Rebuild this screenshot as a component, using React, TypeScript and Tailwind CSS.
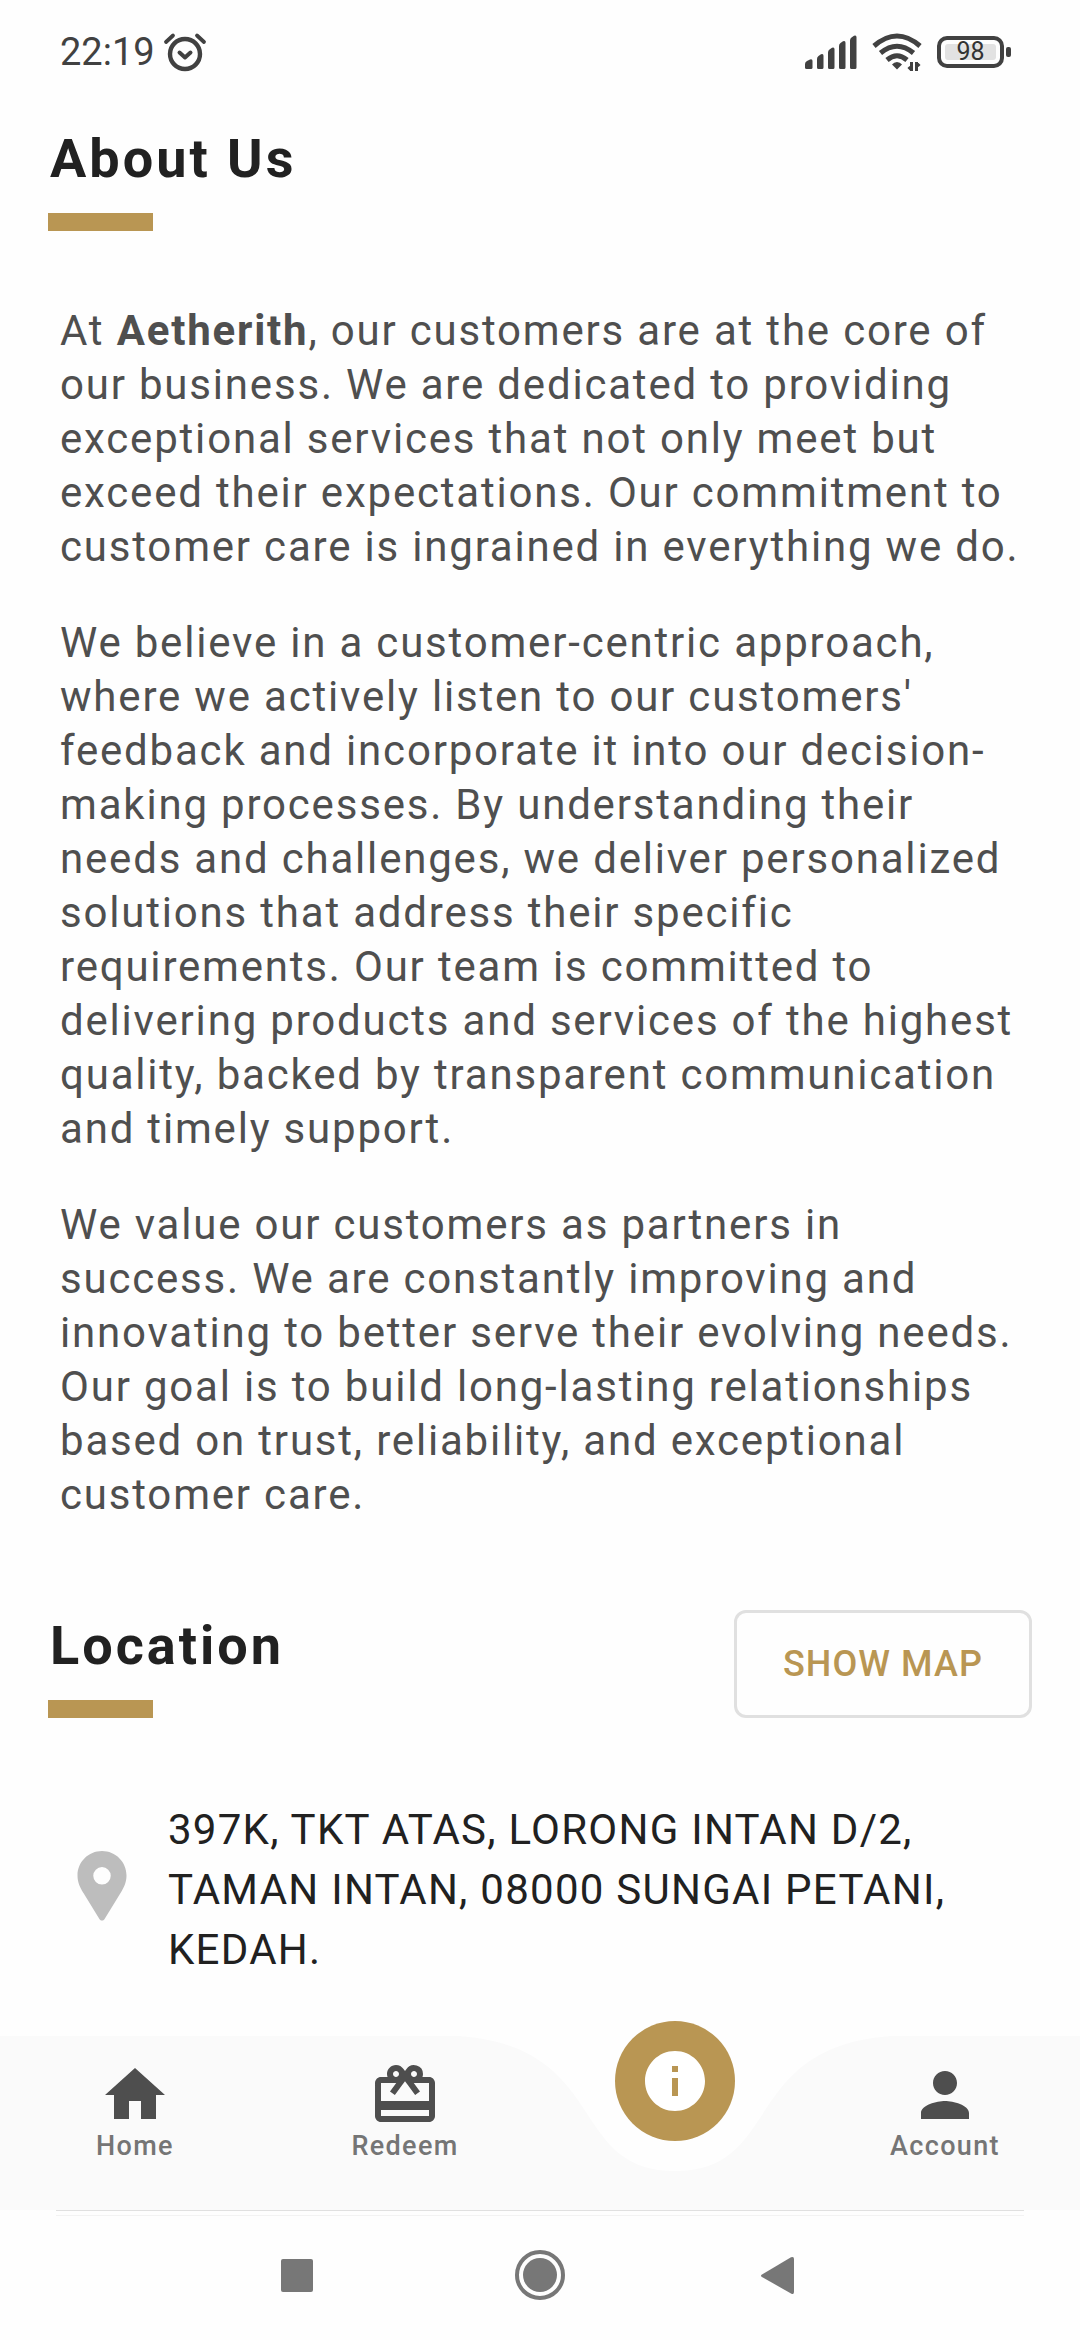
import { ReactNode } from "react";
import { MdHome, MdRedeem, MdInfo, MdPerson } from "react-icons/md";

const GRAY = "#414141";

function AlarmIcon() {
  return (
    <svg width="44" height="40" viewBox="0 0 44 40" fill="none" stroke={GRAY} strokeLinecap="round" aria-label="Alarm set">
      <circle cx="22" cy="22" r="15" strokeWidth="4.4" />
      <path d="M16.5 20.5l5.5 5 5.5-5" strokeWidth="4" strokeLinejoin="round" />
      <path d="M3 10l7-6.5M41 10l-7-6.5" strokeWidth="3.8" />
    </svg>
  );
}

function SignalIcon() {
  return (
    <svg width="52" height="34" viewBox="0 0 52 34" fill={GRAY} aria-label="Signal strength">
      <path d="M0 29q0-2 2-3l3-1.5q2.500-.8 2.500 1.500v6.500q0 1.500-1.500 1.500h-4.500q-1.500 0-1.500-1.500z" />
      <path d="M12 24q0-2 1.500-3l2.500-1.800q2.500-1 2.500 1.500v11.800q0 1.500-1.500 1.500h-3.500q-1.500 0-1.500-1.500z" />
      <path d="M23 17.500q0-2 1.500-3l2.500-1.800q2.500-1 2.500 1.500v18.300q0 1.500-1.500 1.500h-3.500q-1.500 0-1.500-1.500z" />
      <path d="M34 11q0-2 1.500-3l2.500-1.800q2.500-1 2.500 1.500v24.800q0 1.500-1.500 1.500h-3.500q-1.500 0-1.500-1.500z" />
      <path d="M45 5.500q0-2 1.500-3l2.500-1.800q2.500-1 2.500 1.500v30.300q0 1.500-1.500 1.500h-3.500q-1.500 0-1.500-1.500z" />
    </svg>
  );
}

function WifiIcon() {
  return (
    <svg width="50" height="40" viewBox="0 0 50 40" fill="none" stroke={GRAY} strokeWidth="5" aria-label="Wi-Fi">
      <path d="M2 14Q25-6 48 14" />
      <path d="M8.500 21Q25 7.500 41.500 21" />
      <path d="M15 28Q25 19.500 35 28" />
      <path d="M25 30q3 0 5 2.500l-5 5-5-5q2-2.500 5-2.500z" fill={GRAY} stroke="none" />
      <path d="M39.500 30v9M36.500 35l3 3M44.500 39v-9M47.500 34l-3-3" strokeWidth="3" />
    </svg>
  );
}

function Battery({ level }: { level: number }) {
  return (
    <div className="flex items-center gap-[2px]">
      <div className="flex h-8 w-[67px] rounded-[10px] border-4 border-[#414141] p-1">
        <div className="flex flex-1 items-center justify-center rounded-[3px] bg-[#e2e2e2] text-[25px] leading-none text-[#333333]">
          {level}
        </div>
      </div>
      <div className="h-[10px] w-[5px] rounded-[2px] bg-[#414141]" />
    </div>
  );
}

function StatusBar() {
  return (
    <header className="flex h-[103px] items-center justify-between pr-[69px] pl-[60px]">
      <div className="flex items-center gap-2">
        <span className="text-[38px] leading-10 text-[#414141]">22:19</span>
        <AlarmIcon />
      </div>
      <div className="flex items-center gap-[15px]">
        <SignalIcon />
        <WifiIcon />
        <Battery level={98} />
      </div>
    </header>
  );
}

function SectionTitle({ children }: { children: ReactNode }) {
  return (
    <div>
      <h2 className="pl-[2px] text-[54px] leading-[72px] font-bold tracking-[3px] text-[#212121]">{children}</h2>
      <div className="mt-[18px] h-[18px] w-[105px] bg-[#b99653]" />
    </div>
  );
}

function NavItem({ label, icon }: { label: string; icon: ReactNode }) {
  return (
    <a href="#" className="flex flex-1 flex-col items-center pt-[23px] text-[#4e4e4e]">
      {icon}
      <span className="-mt-px text-[27px] leading-8 font-medium tracking-wider text-[#757575]">{label}</span>
    </a>
  );
}

function BottomNav() {
  return (
    <nav className="relative flex h-[174px]">
      <svg className="absolute inset-0 h-full w-full" viewBox="0 0 1080 174" preserveAspectRatio="none" aria-hidden="true">
        <path d="M0 0H459C610 11 567 135 675 135S740 11 891 0H1080V174H0Z" fill="#fafafa" />
      </svg>
      <div className="relative flex flex-1">
        <NavItem label="Home" icon={<MdHome size={72} />} />
        <NavItem label="Redeem" icon={<MdRedeem size={72} />} />
        <div className="flex flex-1 justify-center">
          <button aria-label="About" className="-mt-[15px] flex size-[120px] items-center justify-center rounded-full bg-[#b99653] text-white">
            <MdInfo size={72} />
          </button>
        </div>
        <NavItem label="Account" icon={<MdPerson size={72} />} />
      </div>
    </nav>
  );
}

function SystemNav() {
  return (
    <footer className="flex h-[130px] flex-col">
      <div className="mx-14 h-[6px] border-t border-b border-t-[#e0e0e0] border-b-[#f3f3f3]" />
      <div className="flex flex-1 items-center justify-center text-[#777777]">
        <button aria-label="Recent apps" className="flex w-[243px] justify-center">
          <svg width="50" height="50" viewBox="0 0 50 50" fill="currentColor">
            <rect x="9" y="6" width="32" height="33" rx="2" />
          </svg>
        </button>
        <button aria-label="Home screen" className="flex w-[243px] justify-center">
          <svg width="50" height="56" viewBox="0 0 50 56" fill="currentColor">
            <circle cx="25" cy="25" r="23" fill="none" stroke="currentColor" strokeWidth="4" />
            <circle cx="25" cy="25" r="17" />
          </svg>
        </button>
        <button aria-label="Back" className="flex w-[243px] justify-center">
          <svg width="50" height="50" viewBox="0 0 50 50" fill="currentColor">
            <path d="M4 21.500L33 4.300Q36 3 36 6V39q0 3-3 1.500L4 24q-2-1.300 0-2.500z" />
          </svg>
        </button>
      </div>
    </footer>
  );
}

export default function App() {
  return (
    <div className="flex min-h-screen flex-col bg-[#fefefe] font-['Roboto',sans-serif]">
      <StatusBar />
      <main className="flex flex-1 flex-col px-12 pt-5">
        <SectionTitle>About Us</SectionTitle>
        <div className="mt-[73px] flex flex-col gap-[42px] pr-1 pl-3 text-[42px] leading-[54px] tracking-[0.043em] text-[#4f4f4f]">
          <p>
            At <strong>Aetherith</strong>, our customers are at the core of our business. We are dedicated to providing
            exceptional services that not only meet but exceed their expectations. Our commitment to customer care is
            ingrained in everything we do.
          </p>
          <p>
            We believe in a customer-centric approach, where we actively listen to our customers' feedback and
            incorporate it into our decision-making processes. By understanding their needs and challenges, we deliver
            personalized solutions that address their specific requirements. Our team is committed to delivering
            products and services of the highest quality, backed by transparent communication and timely support.
          </p>
          <p>
            We value our customers as partners in success. We are constantly improving and innovating to better serve
            their evolving needs. Our goal is to build long-lasting relationships based on trust, reliability, and
            exceptional customer care.
          </p>
        </div>
        <div className="mt-[88px] flex items-start justify-between">
          <SectionTitle>Location</SectionTitle>
          <button className="h-[108px] rounded-xl border-[3px] border-[#e0e0e0] px-[46px] text-4xl font-medium tracking-[0.03em] text-[#b99653]">
            SHOW MAP
          </button>
        </div>
        <div className="mt-[82px] flex items-center gap-6 pl-3">
          <svg className="mb-2 shrink-0" width="84" height="84" viewBox="0 0 24 24" fill="#bdbdbd" aria-hidden="true">
            <path d="M12 2C8.130 2 5 5.130 5 9c0 1.900.7 3.400 1.700 5l4.600 7.500c.3.500 1.100.5 1.400 0L17.300 14c1-1.600 1.700-3.100 1.700-5 0-3.870-3.130-7-7-7zm0 9.600a2.500 2.500 0 0 1 0-5 2.500 2.500 0 0 1 0 5z" />
          </svg>
          <address className="text-[42px] leading-[60px] tracking-[0.03em] text-[#212121] not-italic">
            397K, TKT ATAS, LORONG INTAN D/2, TAMAN INTAN, 08000 SUNGAI PETANI, KEDAH.
          </address>
        </div>
      </main>
      <BottomNav />
      <SystemNav />
    </div>
  );
}
